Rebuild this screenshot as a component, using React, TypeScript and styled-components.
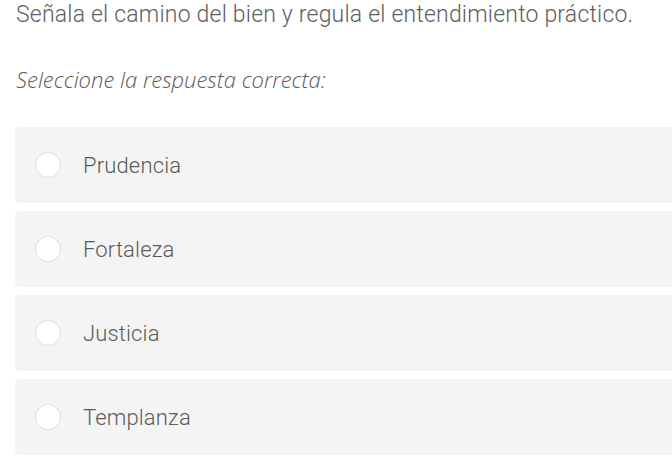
import * as React from 'react';
import styled, { createGlobalStyle } from 'styled-components'

const GlobalStyle = createGlobalStyle`
html, body {
margin: 0;
padding: 0;
background: #ffffff;
}
body {
font-family: Roboto, "Liberation Sans", sans-serif;
}
`

const QuestionContainer = styled.div`
width: 672px;
height: 456px;
overflow: hidden;
padding: 2px 0 0 16px;
box-sizing: border-box;
`

const QuestionTitle = styled.p`
margin: 0;
font-size: 23px;
font-weight: 300;
line-height: 26px;
color: #5e5e5e;
letter-spacing: 0.2px;
white-space: nowrap;
`

const Hint = styled.p`
margin: 36px 0 0 0;
font-family: "Open Sans", sans-serif;
font-style: italic;
font-weight: 300;
font-size: 22px;
line-height: 30px;
color: #5a5a5a;
`

const OptionList = styled.div`
display: flex;
flex-direction: column;
gap: 8px;
margin: 33px 0 0 -1px;
`

const Option = styled.label`
display: flex;
align-items: center;
height: 76px;
width: 680px;
padding-left: 20px;
box-sizing: border-box;
background: #f4f4f4;
border-radius: 4px;
cursor: pointer;
`

const Radio = styled.span`
width: 26px;
height: 26px;
border-radius: 50%;
border: 1px solid #dcdcdc;
background: #fff;
box-sizing: border-box;
flex-shrink: 0;
`

const OptionText = styled.span`
margin-left: 22px;
font-size: 22px;
font-weight: 300;
color: #5a5a5a;
letter-spacing: 0.15px;
`

const options = ['Prudencia', 'Fortaleza', 'Justicia', 'Templanza']

const App: React.FC = () => {
    return (
<>
    <GlobalStyle />
    <QuestionContainer>
        <QuestionTitle>Señala el camino del bien y regula el entendimiento práctico.</QuestionTitle>
        <Hint>Seleccione la respuesta correcta:</Hint>
        <OptionList>
            {options.map(option => (
                <Option key={option}>
                    <Radio />
                    <OptionText>{option}</OptionText>
                </Option>
            ))}
        </OptionList>
    </QuestionContainer>
</>
    )
}

export default App
